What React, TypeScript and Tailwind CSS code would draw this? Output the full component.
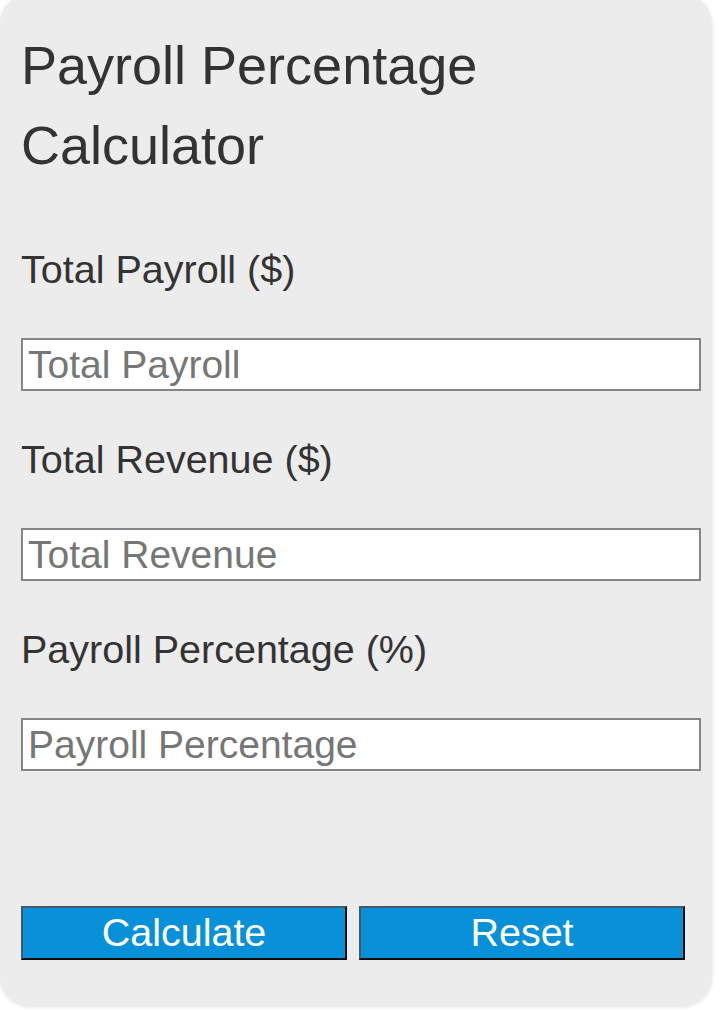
const fields = [
  { label: "Total Payroll ($)", placeholder: "Total Payroll" },
  { label: "Total Revenue ($)", placeholder: "Total Revenue" },
  { label: "Payroll Percentage (%)", placeholder: "Payroll Percentage" },
];

function CalcButton({ children }: { children: string }) {
  return (
    <button
      type="button"
      className="h-[54px] w-[326px] border-2 border-t-[#3d5a6b] border-l-[#3d5a6b] border-b-[#0d0d0d] border-r-[#0d0d0d] bg-[#0891d9] text-[39.5px] leading-none text-white"
    >
      {children}
    </button>
  );
}

export default function App() {
  return (
    <div className="h-[1011px] w-[720px] overflow-hidden bg-white font-['Liberation_Sans',Arial,sans-serif] text-[#333]">
      <div className="-mt-[6px] flex h-[1012px] w-[712px] flex-col rounded-[30px] bg-[#ececec] pl-[21px] pt-[31px] shadow-[0_1px_4px_rgba(0,0,0,0.12)]">
        <h1 className="w-[520px] text-[54px] font-normal leading-[80px]">
          Payroll Percentage Calculator
        </h1>

        <div className="mt-[62px] flex flex-col">
          {fields.map((f, i) => (
            <div key={f.label} className={i === 0 ? "" : "mt-[46px]"}>
              <label className="block h-[45px] text-[39.5px] leading-[45px]">{f.label}</label>
              <input
                type="text"
                placeholder={f.placeholder}
                className="mt-[46px] block h-[53px] w-[680px] border-2 border-[#858585] bg-white pl-[5px] text-[39px] leading-[45px] outline-none placeholder:text-[#767676]"
              />
            </div>
          ))}
        </div>

        <div className="mt-[135px] flex gap-[12px]">
          <CalcButton>Calculate</CalcButton>
          <CalcButton>Reset</CalcButton>
        </div>
      </div>
    </div>
  );
}
